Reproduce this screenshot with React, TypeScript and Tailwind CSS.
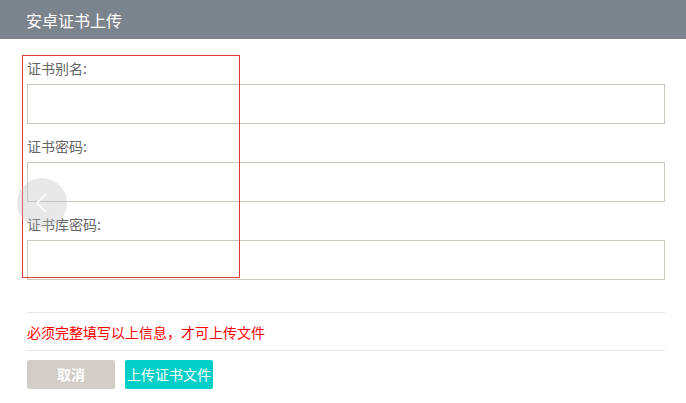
export default function App() {
  const fields = ["证书别名:", "证书密码:", "证书库密码:"];

  return (
    <div className="relative w-[686px] h-[403px] bg-white overflow-hidden font-['Noto_Sans_CJK_SC','Noto_Sans',sans-serif]">
      {/* header */}
      <div className="h-[39px] bg-[#7b838c] flex items-center pl-[26px]">
        <h1 className="text-white text-[16px] font-normal leading-none">安卓证书上传</h1>
      </div>

      <div className="pl-[27px] pr-[21px] pt-[19px]">
        <div className="flex flex-col gap-[12px]">
          {fields.map((f) => (
            <div key={f} className="flex flex-col gap-[4px]">
              <label className="h-[22px] leading-[20px] text-[14px] text-[#666]">{f}</label>
              <input
                type="text"
                className="h-[40px] w-full border border-[#ccc9c0] outline-none px-2 text-[14px]"
              />
            </div>
          ))}
        </div>

        <div className="mt-[32px] border-y border-[#e6e6e6] h-[39px] flex items-center">
          <p className="text-[14px] text-[#ff0000] leading-none">必须完整填写以上信息，才可上传文件</p>
        </div>

        <div className="mt-[9px] flex gap-[10px]">
          <button className="w-[88px] h-[29px] rounded-[2px] bg-[#d1cec8] text-white text-[14px] font-bold">
            取消
          </button>
          <button className="w-[88px] h-[29px] rounded-[2px] bg-[#00cfc8] text-white text-[14px]">
            上传证书文件
          </button>
        </div>
      </div>

      {/* debug outline overlay */}
      <div className="absolute left-[22px] top-[55px] w-[218px] h-[223px] border border-[#e53935] pointer-events-none" />

      {/* floating back button */}
      <div className="absolute left-[17px] top-[178px] w-[50px] h-[50px] rounded-full bg-[rgba(190,190,190,0.35)] flex items-center justify-center">
        <svg width="12" height="20" viewBox="0 0 12 20" fill="none">
          <path d="M10 1 L1 10 L10 19" stroke="white" strokeWidth="1.5" />
        </svg>
      </div>
    </div>
  );
}
